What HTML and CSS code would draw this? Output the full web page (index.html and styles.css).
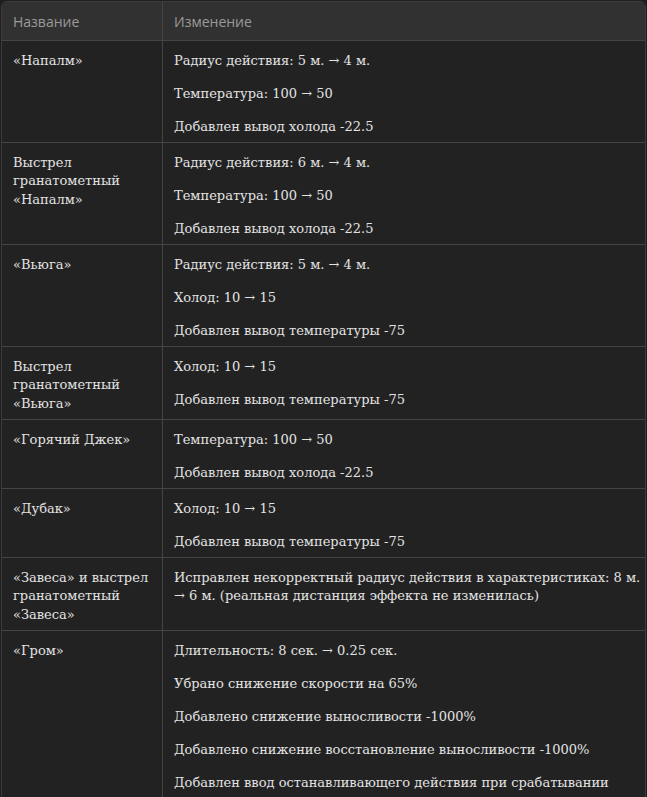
FILE: index.html
```html
<!DOCTYPE html>
<html lang="ru">
<head>
<meta charset="utf-8">
<title>Изменения</title>
<link rel="stylesheet" href="styles.css">
</head>
<body>
<div class="wrap">
<table class="tbl">
<thead>
<tr><th class="c-name">Название</th><th>Изменение</th></tr>
</thead>
<tbody>
<tr><td class="c-name">«Напалм»</td><td><p>Радиус действия: 5 м. → 4 м.</p><p>Температура: 100 → 50</p><p>Добавлен вывод холода -22.5</p></td></tr>
<tr><td class="c-name">Выстрел гранатометный «Напалм»</td><td><p>Радиус действия: 6 м. → 4 м.</p><p>Температура: 100 → 50</p><p>Добавлен вывод холода -22.5</p></td></tr>
<tr><td class="c-name">«Вьюга»</td><td><p>Радиус действия: 5 м. → 4 м.</p><p>Холод: 10 → 15</p><p>Добавлен вывод температуры -75</p></td></tr>
<tr><td class="c-name">Выстрел гранатометный «Вьюга»</td><td><p>Холод: 10 → 15</p><p>Добавлен вывод температуры -75</p></td></tr>
<tr><td class="c-name">«Горячий Джек»</td><td><p>Температура: 100 → 50</p><p>Добавлен вывод холода -22.5</p></td></tr>
<tr><td class="c-name">«Дубак»</td><td><p>Холод: 10 → 15</p><p>Добавлен вывод температуры -75</p></td></tr>
<tr><td class="c-name">«Завеса» и выстрел гранатометный «Завеса»</td><td><p>Исправлен некорректный радиус действия в характеристиках: 8 м. → 6 м. (реальная дистанция эффекта не изменилась)</p></td></tr>
<tr><td class="c-name">«Гром»</td><td><p>Длительность: 8 сек. → 0.25 сек.</p><p>Убрано снижение скорости на 65%</p><p>Добавлено снижение выносливости -1000%</p><p>Добавлено снижение восстановление выносливости -1000%</p><p>Добавлен ввод останавливающего действия при срабатывании</p></td></tr>
</tbody>
</table>
</div>
</body>
</html>
```
FILE: styles.css
```css
html, body {
  margin: 0;
  padding: 0;
  background: #1e1e1e;
}
body {
  padding: 1px 1px 0 1px;
}
.wrap {
  border: 1px solid #3c3c3c;
  border-radius: 6px 6px 0 0;
  overflow: hidden;
  background: #222222;
}
.tbl {
  width: 100%;
  border-collapse: collapse;
  table-layout: fixed;
}
.tbl th {
  background: #313131;
  color: #9a9a9a;
  font-family: "Open Sans", sans-serif;
  font-weight: 400;
  font-size: 14px;
  line-height: 19px;
  text-align: left;
  padding: 10px 11px 9px 11px;
  border-bottom: 1px solid #444;
}
.tbl th + th, .tbl td + td {
  border-left: 1px solid #444;
}
.c-name {
  width: 138px;
}
.tbl td {
  vertical-align: top;
  color: #e2e2e2;
  font-family: "DejaVu Serif", serif;
  font-size: 13px;
  line-height: 18.5px;
  padding: 10.5px 4px 6px 11px;
  border-top: 1px solid #444;
}
.tbl td.c-name {
  padding-right: 6px;
}
.tbl tbody tr:first-child td {
  border-top: none;
}
.tbl td p {
  margin: 0 0 14.5px 0;
}
.tbl td p:last-child {
  margin-bottom: 0;
}
```
